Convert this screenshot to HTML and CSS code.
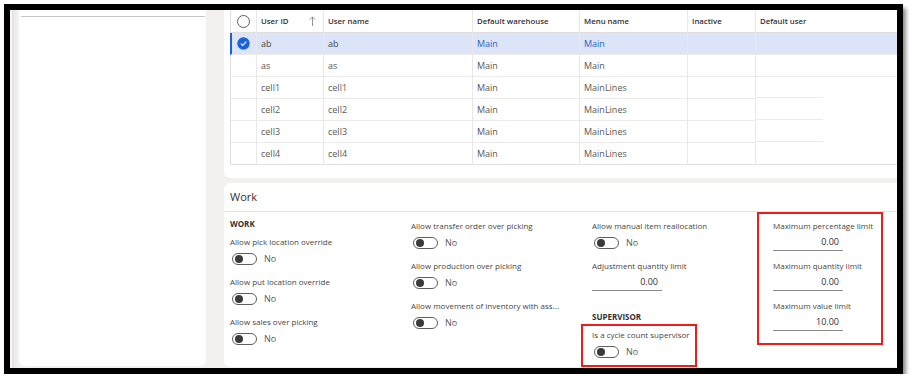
FILE: index.html
```html
<!doctype html>
<html>
<head>
<meta charset="utf-8">
<title>Mobile device users</title>
<link rel="stylesheet" href="styles.css">
</head>
<body>
<div class="frame">
  <div class="app">
    <div class="rail"></div>
    <div class="side">
      <div class="side-head"></div>
    </div>
    <div class="main">
      <div class="grid-card">
        <div class="grid">
          <div class="row head">
            <div class="c chk"><span class="ring"></span></div>
            <div class="c sort">User ID
              <svg width="7" height="10" viewBox="0 0 7 10"><path d="M3.5 1v9M0.8 3.6 3.5 0.9 6.2 3.6" fill="none" stroke="#8a8886" stroke-width="0.9"/></svg>
            </div>
            <div class="c">User name</div>
            <div class="c">Default warehouse</div>
            <div class="c">Menu name</div>
            <div class="c">Inactive</div>
            <div class="c">Default user</div>
          </div>
          <div class="row sel">
            <div class="c chk">
              <svg width="13" height="13" viewBox="0 0 13 13"><circle cx="6.5" cy="6.5" r="6.2" fill="#1f62d8"/><path d="M3.8 6.7 5.7 8.5 9.3 4.7" fill="none" stroke="#fff" stroke-width="1.1"/></svg>
            </div>
            <div class="c dark">ab</div>
            <div class="c dark">ab</div>
            <div class="c link">Main</div>
            <div class="c link">Main</div>
            <div class="c"></div>
            <div class="c"></div>
          </div>
          <div class="row">
            <div class="c chk"></div>
            <div class="c">as</div>
            <div class="c">as</div>
            <div class="c">Main</div>
            <div class="c">Main</div>
            <div class="c"></div>
            <div class="c"></div>
          </div>
          <div class="row short">
            <div class="c chk"></div>
            <div class="c">cell1</div>
            <div class="c">cell1</div>
            <div class="c">Main</div>
            <div class="c">MainLines</div>
            <div class="c"></div>
            <div class="c"></div>
          </div>
          <div class="row short">
            <div class="c chk"></div>
            <div class="c">cell2</div>
            <div class="c">cell2</div>
            <div class="c">Main</div>
            <div class="c">MainLines</div>
            <div class="c"></div>
            <div class="c"></div>
          </div>
          <div class="row short">
            <div class="c chk"></div>
            <div class="c">cell3</div>
            <div class="c">cell3</div>
            <div class="c">Main</div>
            <div class="c">MainLines</div>
            <div class="c"></div>
            <div class="c"></div>
          </div>
          <div class="row short last">
            <div class="c chk"></div>
            <div class="c">cell4</div>
            <div class="c">cell4</div>
            <div class="c">Main</div>
            <div class="c">MainLines</div>
            <div class="c"></div>
            <div class="c"></div>
          </div>
        </div>
      </div>

      <div class="work-card">
        <div class="work-title">Work</div>
        <div class="work-body">
          <div class="col first">
            <div class="sec">WORK</div>
            <div class="field">
              <div class="lbl">Allow pick location override</div>
              <div class="tg"><span class="sw"><i></i></span>No</div>
            </div>
            <div class="field">
              <div class="lbl">Allow put location override</div>
              <div class="tg"><span class="sw"><i></i></span>No</div>
            </div>
            <div class="field">
              <div class="lbl">Allow sales over picking</div>
              <div class="tg"><span class="sw"><i></i></span>No</div>
            </div>
          </div>
          <div class="col">
            <div class="field">
              <div class="lbl">Allow transfer order over picking</div>
              <div class="tg"><span class="sw"><i></i></span>No</div>
            </div>
            <div class="field">
              <div class="lbl">Allow production over picking</div>
              <div class="tg"><span class="sw"><i></i></span>No</div>
            </div>
            <div class="field">
              <div class="lbl">Allow movement of inventory with ass...</div>
              <div class="tg"><span class="sw"><i></i></span>No</div>
            </div>
          </div>
          <div class="col">
            <div class="field">
              <div class="lbl">Allow manual item reallocation</div>
              <div class="tg"><span class="sw"><i></i></span>No</div>
            </div>
            <div class="field">
              <div class="lbl">Adjustment quantity limit</div>
              <div class="num">0.00</div>
            </div>
            <div class="sec sup">SUPERVISOR</div>
            <div class="field marked">
              <div class="lbl">Is a cycle count supervisor</div>
              <div class="tg"><span class="sw"><i></i></span>No</div>
            </div>
          </div>
          <div class="col limits">
            <div class="field">
              <div class="lbl">Maximum percentage limit</div>
              <div class="num">0.00</div>
            </div>
            <div class="field">
              <div class="lbl">Maximum quantity limit</div>
              <div class="num">0.00</div>
            </div>
            <div class="field">
              <div class="lbl">Maximum value limit</div>
              <div class="num">10.00</div>
            </div>
          </div>
        </div>
      </div>
    </div>
  </div>
</div>
</body>
</html>
```

FILE: styles.css
```css
*{
	margin: 0;
	padding: 0;
	box-sizing: border-box;
}
body{
	background: #fff;
	font-family: "Open Sans", "Segoe UI", sans-serif;
	color: #5a5856;
}
.frame{
	margin: 4px 0 0 4px;
	width: 899px;
	height: 370px;
	border: 6px solid #000;
	box-shadow: 3px 4px 4px rgba(0,0,0,0.45);
}
.app{
	display: flex;
	height: 100%;
	background: #f2f1f0;
	overflow: hidden;
}
.rail{
	width: 8px;
	flex: none;
	background: linear-gradient(to right, #f7f6f5 0, #f7f6f5 2px, #e4e2e0 2px, #f4f3f2 8px);
}
.side{
	width: 187px;
	flex: none;
	margin-left: 1px;
	height: 356px;
	background: #fff;
	border-radius: 0 0 6px 6px;
}
.side-head{
	height: 7px;
	margin: 0 1px 0 2px;
	border-bottom: 1px solid #c8c6c4;
}
.main{
	flex: 1;
	margin-left: 18px;
	margin-right: -12px;
	display: flex;
	flex-direction: column;
	gap: 5px;
}

/* grid */
.grid-card{
	height: 168px;
	padding-left: 6px;
	background: #fff;
	border-radius: 0 0 6px 6px;
}
.row{
	display: grid;
	grid-template-columns: 27px 67px 149px 107px 108px 68px 1fr;
	height: 22px;
}
.row.head{
	height: 23px;
}
.head .c{
	height: 23px;
	line-height: 22px;
}
.c{
	height: 22px;
	padding-left: 4px;
	border-right: 1px solid #e9e8e6;
	border-bottom: 1px solid #edebe9;
	font-size: 9px;
	line-height: 21px;
	white-space: nowrap;
	overflow: hidden;
}
.c.chk{
	padding: 0;
	border-left: 1px solid #e1dfdd;
	display: flex;
	align-items: center;
	justify-content: center;
}
.head .c{
	font-size: 7.8px;
	font-weight: 600;
	color: #323130;
	border-bottom-color: #e1dfdd;
}
.ring{
	width: 13px;
	height: 13px;
	border: 1px solid #605e5c;
	border-radius: 50%;
}
.sort{
	display: flex;
	align-items: center;
	justify-content: space-between;
	padding-right: 7px;
}
.sel{
	background: #dbe5f7;
}
.sel .c.chk{
	border-left: 2px solid #1f62d8;
	padding-right: 1px;
}
.dark{
	color: #484644;
}
.link{
	color: #2b62c4;
}
.short .c:last-child{
	border-bottom-color: transparent;
	background: linear-gradient(#edebe9, #edebe9) left bottom / 67px 1px no-repeat;
}
.last .c{
	border-bottom-color: #e1dfdd;
}
.last .c:last-child{
	border-bottom-color: #e1dfdd;
	background: none;
}

/* work */
.work-card{
	flex: 1;
	margin-bottom: 1px;
	background: #fff;
	border-radius: 6px;
}
.work-title{
	height: 29px;
	padding-left: 6px;
	line-height: 28px;
	font-size: 11px;
	color: #323130;
	border-bottom: 1px solid #e6e4e2;
}
.work-body{
	display: flex;
	padding: 3px 0 0 6px;
}
.col{
	width: 181px;
	margin-top: 2px;
}
.col.first{
	margin-top: 0;
}
.col.limits{
	width: 180px;
	position: relative;
}
.col.limits::after{
	content: "";
	position: absolute;
	left: -16px;
	top: -5px;
	width: 122px;
	height: 129px;
	border: 2px solid #ee1c1c;
}
.sec{
	height: 18px;
	line-height: 18px;
	font-size: 8px;
	font-weight: 700;
	color: #323130;
}
.sec.sup{
	margin-top: 11px;
}
.field{
	height: 40px;
}
.field.marked{
	position: relative;
}
.field.marked::after{
	content: "";
	position: absolute;
	left: -11px;
	top: -2px;
	width: 112px;
	height: 39px;
	border: 2px solid #ee1c1c;
}
.lbl{
	height: 17px;
	line-height: 17px;
	font-size: 8px;
	color: #484644;
	white-space: nowrap;
}
.tg{
	height: 17px;
	display: flex;
	align-items: center;
	gap: 7px;
	padding-left: 2px;
	font-size: 9px;
	color: #5a5856;
}
.sw{
	width: 25px;
	height: 12px;
	border: 1px solid #605e5c;
	border-radius: 7px;
	display: flex;
	align-items: center;
	padding-left: 2px;
}
.sw i{
	width: 8px;
	height: 8px;
	border-radius: 50%;
	background: #3b3a39;
}
.num{
	width: 70px;
	height: 17px;
	line-height: 16px;
	padding-right: 4px;
	text-align: right;
	font-size: 9px;
	color: #323130;
	border-bottom: 1px solid #8a8886;
}
```
